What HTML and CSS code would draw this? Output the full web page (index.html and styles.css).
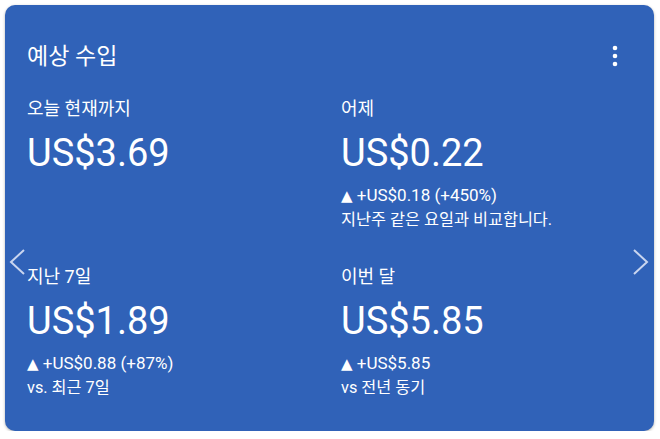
FILE: index.html
```html
<!DOCTYPE html>
<html lang="ko">
<head>
<meta charset="utf-8">
<link rel="stylesheet" href="styles.css">
</head>
<body>
<div class="card">
  <div class="head">
    <div class="title">예상 수입</div>
    <svg class="menu" viewBox="0 0 24 24" width="24" height="24"><circle cx="12" cy="4" r="2.3" fill="#fff"/><circle cx="12" cy="12" r="2.3" fill="#fff"/><circle cx="12" cy="20" r="2.3" fill="#fff"/></svg>
  </div>
  <div class="grid">
    <div class="cell">
      <div class="label">오늘 현재까지</div>
      <div class="value">US$3.69</div>
    </div>
    <div class="cell">
      <div class="label">어제</div>
      <div class="value">US$0.22</div>
      <div class="delta"><div class="change"><span class="tri">▲</span> +US$0.18 (+450%)</div><div class="note">지난주 같은 요일과 비교합니다.</div></div>
    </div>
    <div class="cell">
      <div class="label">지난 7일</div>
      <div class="value">US$1.89</div>
      <div class="delta"><div class="change"><span class="tri">▲</span> +US$0.88 (+87%)</div><div class="note">vs. 최근 7일</div></div>
    </div>
    <div class="cell">
      <div class="label">이번 달</div>
      <div class="value">US$5.85</div>
      <div class="delta"><div class="change"><span class="tri">▲</span> +US$5.85</div><div class="note">vs 전년 동기</div></div>
    </div>
  </div>
  <svg class="arrow arrow-left" viewBox="0 0 16 26" width="16" height="26"><polyline points="15,1 2,13 15,25" fill="none" stroke="#c9d5ef" stroke-width="2"/></svg>
  <svg class="arrow arrow-right" viewBox="0 0 16 26" width="16" height="26"><polyline points="1,1 14,13 1,25" fill="none" stroke="#c9d5ef" stroke-width="2"/></svg>
</div>
</body>
</html>
```
FILE: styles.css
```css
html, body {
  margin: 0;
  padding: 0;
  background: #ffffff;
}
body {
  font-family: Roboto, "Noto Sans CJK KR", sans-serif;
}
.card {
  position: relative;
  box-sizing: border-box;
  width: 649px;
  height: 426px;
  margin: 5px 6px 0 5px;
  padding: 37px 22px 0 22px;
  background: #3062b8;
  border-radius: 10px;
  box-shadow: 0 1px 3px rgba(0, 0, 0, 0.3);
  color: #ffffff;
}
.head {
  display: flex;
  justify-content: space-between;
  align-items: center;
  height: 30px;
}
.title {
  font-size: 23px;
  line-height: 30px;
}
.menu {
  margin-right: 5px;
  margin-top: -2px;
}
.grid {
  margin-top: 25px;
  display: grid;
  grid-template-columns: 314px 1fr;
  grid-auto-rows: 168px;
}
.label {
  font-size: 18px;
  line-height: 24px;
}
.value {
  margin-top: 10px;
  font-size: 38px;
  line-height: 44px;
}
.delta {
  margin-top: 9px;
  line-height: 23px;
}
.change {
  font-size: 17px;
}
.note {
  font-size: 16.3px;
}
.tri {
  font-family: "DejaVu Sans", sans-serif;
  font-size: 15px;
}
.arrow {
  position: absolute;
  top: 244px;
}
.arrow-left {
  left: 4px;
}
.arrow-right {
  right: 5px;
}
```
